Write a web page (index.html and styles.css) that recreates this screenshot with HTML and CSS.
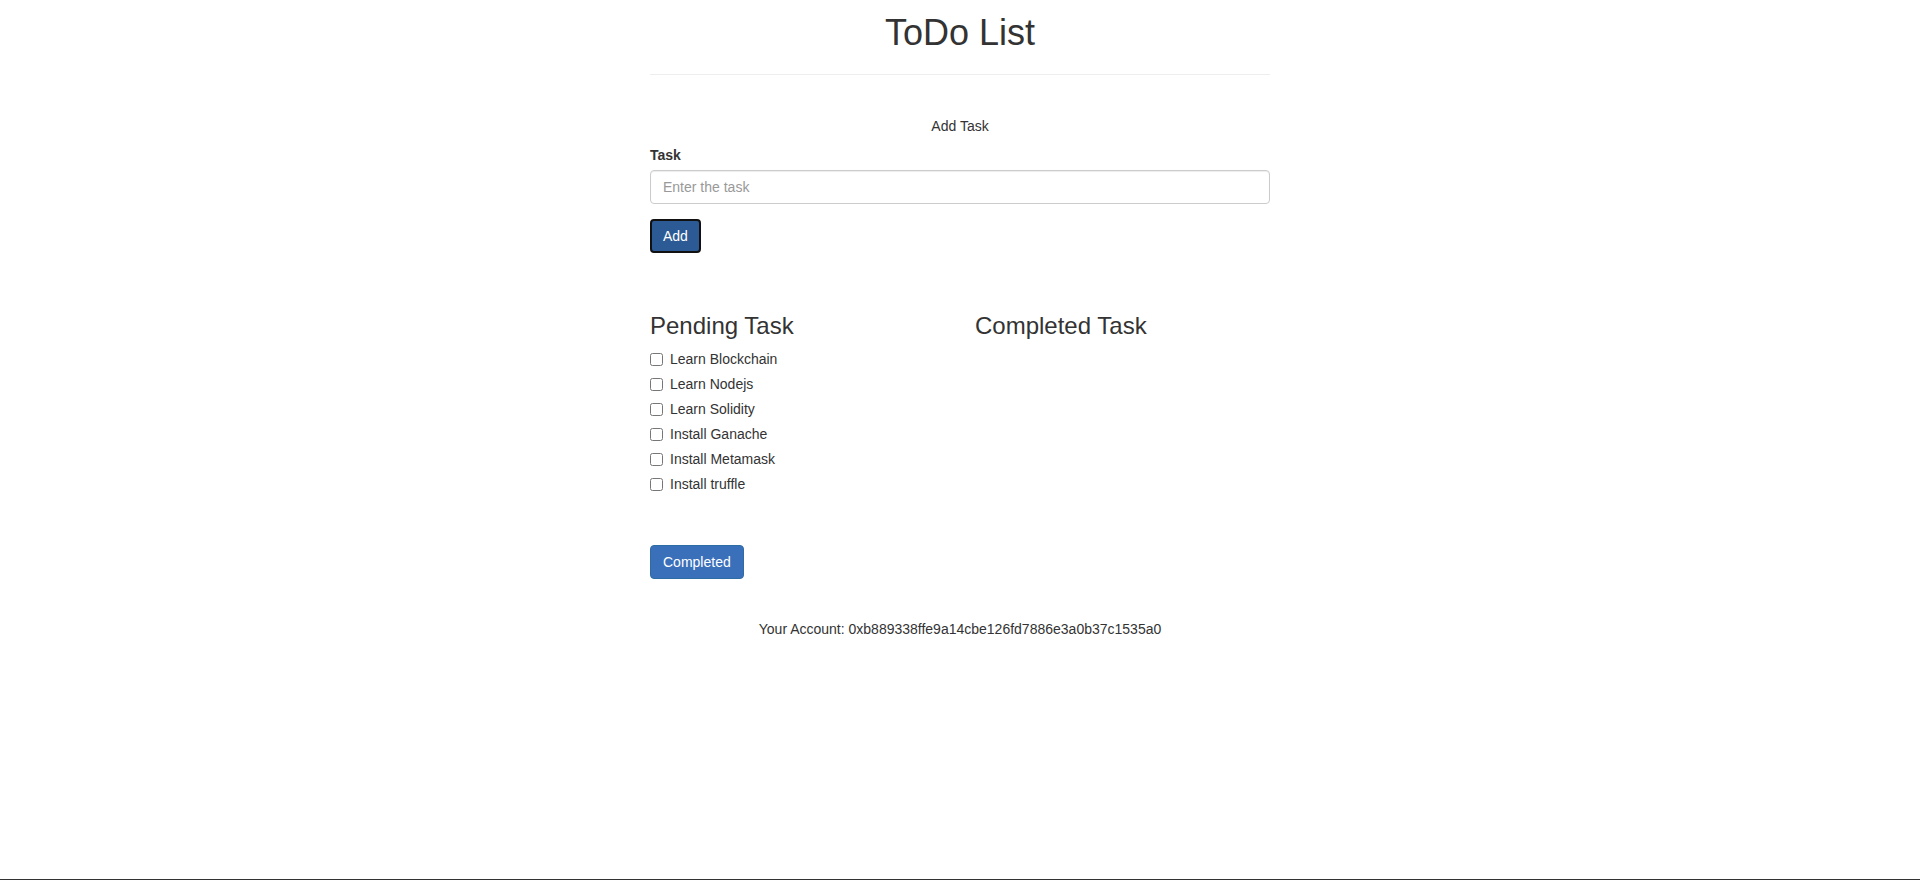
FILE: index.html
```html
<!DOCTYPE html>
<html lang="en">
<head>
<meta charset="utf-8">
<title>ToDo List</title>
<link rel="stylesheet" href="styles.css">
</head>
<body>
<main class="page">
  <div class="container">
    <header class="page-header">
      <h1 class="title">ToDo List</h1>
    </header>

    <form class="add-form">
      <div class="add-title">Add Task</div>
      <div class="form-group">
        <label class="field-label" for="task">Task</label>
        <input class="form-control" id="task" type="text" placeholder="Enter the task">
      </div>
      <button type="button" class="btn btn-add">Add</button>
    </form>

    <div class="task-row">
      <section class="task-col">
        <h3 class="col-title">Pending Task</h3>
        <ul class="task-list">
          <li class="checkbox"><label><input type="checkbox"><span>Learn Blockchain</span></label></li>
          <li class="checkbox"><label><input type="checkbox"><span>Learn Nodejs</span></label></li>
          <li class="checkbox"><label><input type="checkbox"><span>Learn Solidity</span></label></li>
          <li class="checkbox"><label><input type="checkbox"><span>Install Ganache</span></label></li>
          <li class="checkbox"><label><input type="checkbox"><span>Install Metamask</span></label></li>
          <li class="checkbox"><label><input type="checkbox"><span>Install truffle</span></label></li>
        </ul>
      </section>
      <section class="task-col">
        <h3 class="col-title">Completed Task</h3>
      </section>
    </div>

    <button type="button" class="btn btn-primary">Completed</button>

    <p class="account">Your Account: 0xb889338ffe9a14cbe126fd7886e3a0b37c1535a0</p>
  </div>
</main>
<div class="bottom-bar"></div>
</body>
</html>
```

FILE: styles.css
```css
* {
  box-sizing: border-box;
}

html, body {
  margin: 0;
  padding: 0;
}

body {
  min-height: 100vh;
  display: flex;
  flex-direction: column;
  background: #fff;
  color: #333;
  font-family: "Liberation Sans", Arial, Helvetica, sans-serif;
  font-size: 14px;
  line-height: 20px;
}

.page {
  flex: 1 0 auto;
}

.container {
  width: 650px;
  margin: 0 auto;
  padding: 0 15px;
}

.page-header {
  padding-bottom: 21px;
  border-bottom: 1px solid #eee;
}

.title {
  margin: 13px 0 0;
  font-size: 36px;
  line-height: 39.6px;
  font-weight: 400;
  text-align: center;
}

.add-form {
  display: flex;
  flex-direction: column;
  align-items: flex-start;
}

.add-title {
  align-self: stretch;
  margin-top: 41px;
  text-align: center;
}

.form-group {
  align-self: stretch;
  display: flex;
  flex-direction: column;
  align-items: flex-start;
  margin-top: 9px;
  margin-bottom: 15px;
}

.field-label {
  font-weight: 700;
  margin-bottom: 5px;
}

.form-control {
  width: 100%;
  height: 34px;
  padding: 6px 12px;
  font-family: inherit;
  font-size: 14px;
  line-height: 20px;
  color: #555;
  background: #fff;
  border: 1px solid #ccc;
  border-radius: 4px;
  box-shadow: inset 0 1px 1px rgba(0, 0, 0, 0.075);
  outline: none;
}

.form-control::placeholder {
  color: #999;
}

.btn {
  display: inline-block;
  height: 34px;
  padding: 6px 12px;
  font-family: inherit;
  font-size: 14px;
  line-height: 20px;
  border: 1px solid transparent;
  border-radius: 4px;
  color: #fff;
  cursor: pointer;
}

.btn-add {
  padding: 5px 11px;
  background: #2c5a94;
  border: 2px solid #111;
}

.btn-primary {
  background: #3a70ba;
  border-color: #2e6da4;
}

.task-row {
  display: grid;
  grid-template-columns: 325px 1fr;
  margin-top: 60px;
}

.col-title {
  margin: 0 0 10px;
  font-size: 24px;
  line-height: 26.4px;
  font-weight: 400;
}

.task-list {
  list-style: none;
  margin: 0 0 51px;
  padding: 0;
  display: flex;
  flex-direction: column;
  gap: 5px;
}

.checkbox label {
  display: flex;
  align-items: flex-start;
  min-height: 20px;
  cursor: pointer;
}

.checkbox input {
  width: 13px;
  height: 13px;
  margin: 4px 7px 0 0;
  flex: none;
}

.account {
  margin: 40px 0 0;
  text-align: center;
}

.bottom-bar {
  flex: none;
  height: 1px;
  background: #333;
}
```
